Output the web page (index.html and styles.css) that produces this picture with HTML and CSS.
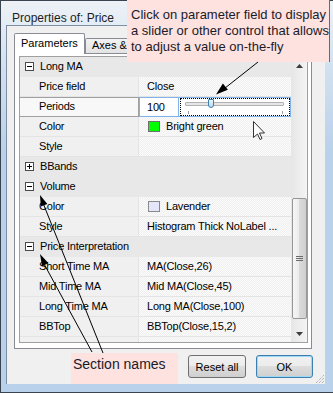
FILE: index.html
```html
<!DOCTYPE html>
<html lang="en">
  <head>
    <meta charset="UTF-8" />
    <title>Properties of: Price</title>
    <link rel="stylesheet" href="styles.css">
  </head>
  <body>
    <div class="window">
      <div class="titlebar">Properties of: Price</div>
      <div class="client">
        <div class="tabs">
          <div class="tab active">Parameters</div>
          <div class="tab">Axes &amp;</div>
        </div>
        <div class="panel">
          <div class="grid">
            <div class="rows">
              <div class="cat"><span class="box"></span>Long MA</div>
              <div class="row"><span class="margin"></span><span class="label">Price field</span><span class="value">Close</span></div>
              <div class="row sel">
                <span class="margin"></span><span class="label">Periods</span>
                <span class="value">
                  <span class="num">100</span>
                  <span class="slider">
                    <span class="track"></span>
                    <span class="thumb"></span>
                    <span class="tick first"></span>
                    <span class="tick last"></span>
                  </span>
                </span>
              </div>
              <div class="row"><span class="margin"></span><span class="label">Color</span><span class="value"><span class="swatch green"></span>Bright green</span></div>
              <div class="row"><span class="margin"></span><span class="label">Style</span><span class="value"></span></div>
              <div class="cat"><span class="box plus"></span>BBands</div>
              <div class="cat"><span class="box"></span>Volume</div>
              <div class="row"><span class="margin"></span><span class="label">Color</span><span class="value"><span class="swatch lavender"></span>Lavender</span></div>
              <div class="row"><span class="margin"></span><span class="label">Style</span><span class="value">Histogram Thick NoLabel ...</span></div>
              <div class="cat"><span class="box"></span>Price Interpretation</div>
              <div class="row"><span class="margin"></span><span class="label">Short Time MA</span><span class="value">MA(Close,26)</span></div>
              <div class="row"><span class="margin"></span><span class="label">Mid Time MA</span><span class="value">Mid MA(Close,45)</span></div>
              <div class="row"><span class="margin"></span><span class="label">Long Time MA</span><span class="value">Long MA(Close,100)</span></div>
              <div class="row"><span class="margin"></span><span class="label">BBTop</span><span class="value">BBTop(Close,15,2)</span></div>
              <div class="row"><span class="margin"></span><span class="label">BBBottom</span><span class="value">BBBottom(Close,15,2)</span></div>
            </div>
            <div class="scrollbar">
              <div class="sb-btn">
                <svg width="7" height="4" viewBox="0 0 7 4"><path d="M3.5 0 L7 4 L0 4 Z" fill="#3c3c3c"/></svg>
              </div>
              <div class="sb-track">
                <div class="sb-thumb"><span class="grip"></span></div>
              </div>
              <div class="sb-btn">
                <svg width="7" height="4" viewBox="0 0 7 4"><path d="M0 0 L7 0 L3.5 4 Z" fill="#3c3c3c"/></svg>
              </div>
            </div>
          </div>
        </div>
        <div class="buttons">
          <button class="reset">Reset all</button>
          <button class="ok">OK</button>
        </div>
      </div>
    </div>

    <div class="callout tip">Click on parameter field to display<br>a slider or other control that allows<br>to adjust a value on-the-fly</div>
    <div class="callout names">Section names</div>

    <svg class="overlay" width="333" height="393" viewBox="0 0 333 393">
      <!-- tooltip pointer -->
      <line x1="258" y1="62" x2="220" y2="92" stroke="#000" stroke-width="1"/>
      <path d="M216 94.5 L227.9 89.7 L222.9 83.5 Z" fill="#000"/>
      <!-- section names pointers -->
      <line x1="103" y1="353" x2="43" y2="203" stroke="#000" stroke-width="1"/>
      <path d="M40 195 L47.3 203.9 L40.8 206.5 Z" fill="#000"/>
      <line x1="92" y1="352" x2="43" y2="262" stroke="#000" stroke-width="1"/>
      <path d="M40 254 L48.3 263 L42.1 266.4 Z" fill="#000"/>
      <!-- mouse cursor -->
      <path transform="translate(253.5 121.5)" d="M0 0 L0 16 L4 12.5 L6.5 18 L8.5 17 L6 11.5 L11 11.5 Z" fill="#fff" stroke="#333" stroke-width="1" stroke-linejoin="round"/>
      <!-- size grip -->
      <g stroke="#9a9a9a" stroke-width="1" stroke-dasharray="1 1">
        <line x1="316" y1="383" x2="324" y2="375"/>
        <line x1="319" y1="383" x2="324" y2="378"/>
        <line x1="322" y1="383" x2="324" y2="381"/>
      </g>
    </svg>
  </body>
</html>
```

FILE: styles.css
```css
* {
  box-sizing: border-box;
}

body {
  margin: 0;
  position: relative;
  width: 333px;
  height: 393px;
  overflow: hidden;
  font-family: "Liberation Sans", Arial, sans-serif;
  font-size: 11px;
  color: #000;
}

.window {
  width: 333px;
  height: 393px;
  border: 1px solid #3a4350;
  border-right: none;
  padding: 0 8px 8px 5px;
  background: linear-gradient(#eef2f7, #d4e2f1 60px, #b9d1ea 150px, #b9d1ea);
}

.titlebar {
  height: 24px;
  padding: 10px 0 0 6px;
  font-size: 12px;
  line-height: 14px;
  color: #1e1e1e;
}

.client {
  height: 359px;
  border-left: 1px solid #7f8fa3;
  border-top: 1px solid #7f8fa3;
  background: #f0f0f0;
  padding: 7px 0 0 7px;
}

/* tabs */

.tabs {
  display: flex;
  align-items: flex-end;
  height: 21px;
  margin-bottom: -1px;
  position: relative;
  z-index: 1;
}

.tab {
  height: 15px;
  width: 76px;
  margin-bottom: 1px;
  padding-left: 6px;
  line-height: 13px;
  white-space: nowrap;
  border: 1px solid #898c95;
  border-bottom: none;
  border-radius: 2px 2px 0 0;
  background: linear-gradient(#f3f3f3, #e3e3e3);
}

.tab.active {
  width: 71px;
  height: 21px;
  margin-bottom: 0;
  line-height: 19px;
  background: #fff;
}

.panel {
  width: 298px;
  height: 296px;
  border: 1px solid #898c95;
  background: #fff;
  padding: 2px 3px 5px 4px;
}

/* property grid */

.grid {
  display: flex;
  height: 287px;
  border: 1px solid #a0a0a0;
}

.rows {
  width: 271px;
  height: 285px;
  overflow: hidden;
  background: #e4e4e4;
  letter-spacing: -0.2px;
}

.cat,
.row {
  display: flex;
  height: 20px;
  padding-bottom: 1px;
  line-height: 19px;
  white-space: nowrap;
}

.cat {
  align-items: center;
  background: #e8e8e8;
}

.box {
  position: relative;
  width: 9px;
  height: 9px;
  margin: 0 6px 0 5px;
  border: 1px solid #4a4a4a;
  background: #fff;
}

.box::before {
  content: "";
  position: absolute;
  left: 1px;
  top: 3px;
  width: 5px;
  height: 1px;
  background: #000;
}

.box.plus::after {
  content: "";
  position: absolute;
  left: 3px;
  top: 1px;
  width: 1px;
  height: 5px;
  background: #000;
}

.margin {
  width: 17px;
  background: #f0f0f0;
}

.label {
  width: 101px;
  margin-right: 1px;
  padding-left: 2px;
  background: #f0f0f0;
  overflow: hidden;
}

.value {
  width: 152px;
  padding-left: 8px;
  overflow: hidden;
  background-color: #f9f9f9;
  background-image: repeating-conic-gradient(#efefef 0 25%, #fcfcfc 0 50%);
  background-size: 2px 2px;
}

.swatch {
  display: inline-block;
  width: 12px;
  height: 11px;
  margin: 0 6px 0 1px;
  vertical-align: -2px;
  border: 1px solid #6e6e6e;
}

.swatch.green {
  background: #00ff00;
}

.swatch.lavender {
  background: #e6e6fa;
  border-color: #8a8a8a;
}

/* selected row with slider editor */

.row.sel {
  padding-bottom: 0;
  background: #f0f0f0;
}

.sel .margin,
.sel .label {
  border-top: 1px solid #a0a0a0;
  border-bottom: 1px solid #a0a0a0;
  background: #f8f8f8;
  line-height: 17px;
}

.sel .label {
  width: 102px;
  margin-right: 0;
  border-right: 1px solid #a0a0a0;
}

.sel .value {
  display: flex;
  padding: 0;
  border: 1px solid #7eb4ea;
  background: #fff;
}

.num {
  width: 39px;
  padding-left: 7px;
  line-height: 18px;
  border-right: 1px solid #7eb4ea;
}

.slider {
  position: relative;
  flex: 1;
  margin-left: 1px;
  border: 1px dotted #000;
}

.track {
  position: absolute;
  left: 4px;
  top: 3px;
  width: 99px;
  height: 4px;
  border: 1px solid #b2b2b2;
  border-radius: 1px;
  background: #e6e6e6;
}

.thumb {
  position: absolute;
  left: 27px;
  top: 0;
  width: 6px;
  height: 9px;
  border: 1px solid #3c7fb1;
  border-radius: 1px 1px 3px 3px;
  background: linear-gradient(#eaf5fd, #b6daf4);
}

.tick {
  position: absolute;
  top: 12px;
  width: 1px;
  height: 3px;
  background: #a0a0a0;
}

.tick.first {
  left: 7px;
}

.tick.last {
  left: 101px;
}

/* scrollbar */

.scrollbar {
  width: 16px;
  display: flex;
  flex-direction: column;
  background: linear-gradient(90deg, #e6e6e6, #f4f4f4);
}

.sb-btn {
  height: 17px;
  display: flex;
  align-items: center;
  justify-content: center;
}

.sb-track {
  flex: 1;
  padding-top: 124px;
}

.sb-thumb {
  display: flex;
  align-items: center;
  justify-content: center;
  width: 15px;
  height: 121px;
  margin-left: 1px;
  border: 1px solid #979797;
  border-radius: 2px;
  background: linear-gradient(90deg, #f6f6f6, #ececec 45%, #dadada 50%, #d0d0d0);
}

.grip {
  width: 7px;
  height: 5px;
  border-top: 1px solid #6a6a6a;
  border-bottom: 1px solid #6a6a6a;
  background: linear-gradient(transparent 1px, #6a6a6a 1px, #6a6a6a 2px, transparent 2px);
}

/* dialog buttons */

.buttons {
  display: flex;
  justify-content: flex-end;
  gap: 10px;
  margin-top: 6px;
  padding-right: 12px;
}

button {
  height: 23px;
  padding: 0;
  font: 11px "Liberation Sans", Arial, sans-serif;
  color: #000;
  border: 1px solid #707070;
  border-radius: 3px;
  background: linear-gradient(#f2f2f2, #ebebeb 50%, #dddddd 50%, #cfcfcf);
}

.reset {
  width: 58px;
}

.ok {
  width: 57px;
  border-color: #3c7fb1;
  box-shadow: inset 0 0 0 1px #9fd8f6;
}

/* annotations */

.callout {
  position: absolute;
  z-index: 2;
  background: #fde2df;
  color: #1a1a2a;
}

.tip {
  left: 127px;
  top: 0;
  width: 203px;
  height: 62px;
  padding: 7px 0 0 4px;
  border-right: 1px solid #6a6a6a;
  font-size: 13px;
  line-height: 16px;
  white-space: nowrap;
}

.names {
  left: 71px;
  top: 353px;
  width: 107px;
  height: 31px;
  padding: 3px 0 0 2px;
  font-size: 14px;
  line-height: 17px;
}

.overlay {
  position: absolute;
  z-index: 3;
  left: 0;
  top: 0;
  pointer-events: none;
}
```
